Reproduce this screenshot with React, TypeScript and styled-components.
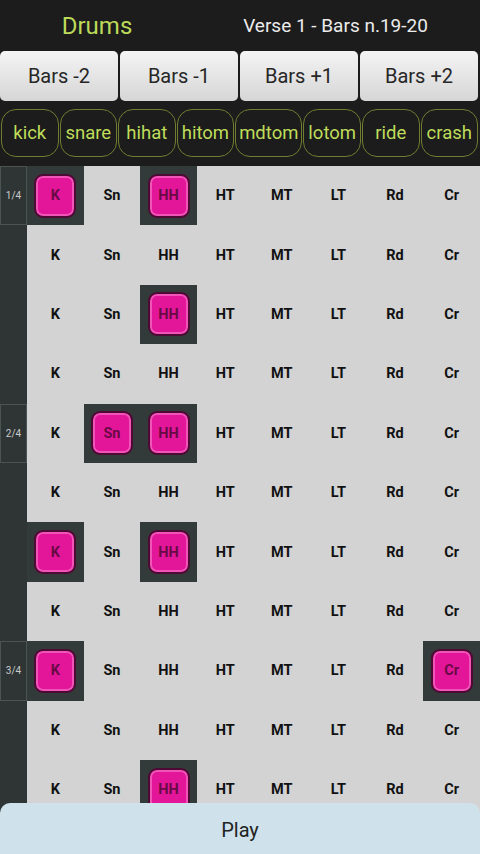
// Drum pattern editor screen
import React from "react";
import styled, { createGlobalStyle } from "styled-components";

const GlobalStyle = createGlobalStyle`
  html, body {
    margin: 0;
    padding: 0;
    background: #1c1c1c;
  }
  * {
    box-sizing: border-box;
  }
`;

const SHORT = ["K", "Sn", "HH", "HT", "MT", "LT", "Rd", "Cr"];
const LONG = ["kick", "snare", "hihat", "hitom", "mdtom", "lotom", "ride", "crash"];
const JUMPS = ["Bars -2", "Bars -1", "Bars +1", "Bars +2"];

// which instruments are on, per sixteenth step
const pattern: number[][] = [
  [0, 2],
  [],
  [2],
  [],
  [1, 2],
  [],
  [0, 2],
  [],
  [0, 7],
  [],
  [2],
];

const beatLabels: { [row: number]: string } = { 0: "1/4", 4: "2/4", 8: "3/4" };

const App: React.FC = () => {
  return (
    <Screen>
      <GlobalStyle />
      <Header>
        <Title>Drums</Title>
        <Position>Verse 1 - Bars n.19-20</Position>
      </Header>
      <JumpBar>
        {JUMPS.map((j) => (
          <JumpButton key={j}>{j}</JumpButton>
        ))}
      </JumpBar>
      <InstrumentBar>
        {LONG.map((name) => (
          <InstrumentPill key={name}>{name}</InstrumentPill>
        ))}
      </InstrumentBar>
      <GridArea>
        {pattern.map((row, i) => (
          <StepRow key={i}>
            <BeatCell $marked={beatLabels[i] !== undefined}>{beatLabels[i]}</BeatCell>
            {SHORT.map((s, c) => {
              const on = row.includes(c);
              return (
                <HitCell key={s} $on={on}>
                  {on ? <HitPad>{s}</HitPad> : s}
                </HitCell>
              );
            })}
          </StepRow>
        ))}
        <PlayButton>Play</PlayButton>
      </GridArea>
    </Screen>
  );
};

// ********** Styles ********************//
const Screen = styled.div`
  width: 480px;
  height: 854px;
  display: flex;
  flex-direction: column;
  background: #1c1c1c;
  font-family: Roboto, "Liberation Sans", sans-serif;
  overflow: hidden;
`;

const Header = styled.div`
  height: 51px;
  display: flex;
  align-items: center;
`;

const Title = styled.div`
  width: 194px;
  text-align: center;
  color: #bcd95a;
  font-size: 24px;
`;

const Position = styled.div`
  flex: 1;
  text-align: center;
  color: #ececec;
  font-size: 19px;
  padding-right: 3px;
`;

const JumpBar = styled.div`
  display: flex;
  gap: 2px;
  padding-right: 2px;
`;

const JumpButton = styled.button`
  flex: 1;
  height: 50px;
  border: 0;
  border-radius: 5px;
  background: linear-gradient(#f4f4f4, #d6d6d6);
  color: #262626;
  font-family: Roboto, "Liberation Sans", sans-serif;
  font-size: 20px;
  padding: 0;
`;

const InstrumentBar = styled.div`
  display: flex;
  gap: 1px;
  padding: 8px 2px 0 1px;
  height: 65px;
`;

const InstrumentPill = styled.div`
  flex: 1;
  height: 48px;
  padding: 0 3px;
  border: 1.5px solid #6f7d30;
  border-radius: 15px;
  display: flex;
  align-items: center;
  justify-content: center;
  color: #bfdc5a;
  font-size: 18.5px;
  white-space: nowrap;
`;

const GridArea = styled.div`
  flex: 1;
  position: relative;
  overflow: hidden;
  background: #2f3535;
`;

const StepRow = styled.div`
  display: grid;
  grid-template-columns: 27px repeat(8, 1fr);
  height: 59.4px;
`;

const BeatCell = styled.div<{ $marked: boolean }>`
  background: #2f3535;
  border: 1px solid ${(p) => (p.$marked ? "#4b5353" : "transparent")};
  color: #c8cccc;
  font-size: 10px;
  display: flex;
  align-items: center;
  justify-content: center;
`;

const HitCell = styled.div<{ $on: boolean }>`
  background: ${(p) => (p.$on ? "#333a3a" : "#d3d3d3")};
  color: #111;
  font-size: 14.5px;
  font-weight: bold;
  display: flex;
  align-items: center;
  justify-content: center;
`;

const HitPad = styled.div`
  width: 42px;
  height: 44px;
  border-radius: 9px;
  background: #e3169a;
  border: 2px solid #4e0a34;
  box-shadow: inset 0 0 0 2px #ee55b6;
  color: #6a0a45;
  display: flex;
  align-items: center;
  justify-content: center;
`;

const PlayButton = styled.div`
  position: absolute;
  left: 0;
  right: 0;
  bottom: 0;
  height: 51px;
  padding-top: 3px;
  border-radius: 10px 10px 0 0;
  background: #cfe2ec;
  color: #222;
  font-size: 20px;
  display: flex;
  align-items: center;
  justify-content: center;
`;

export default App;
